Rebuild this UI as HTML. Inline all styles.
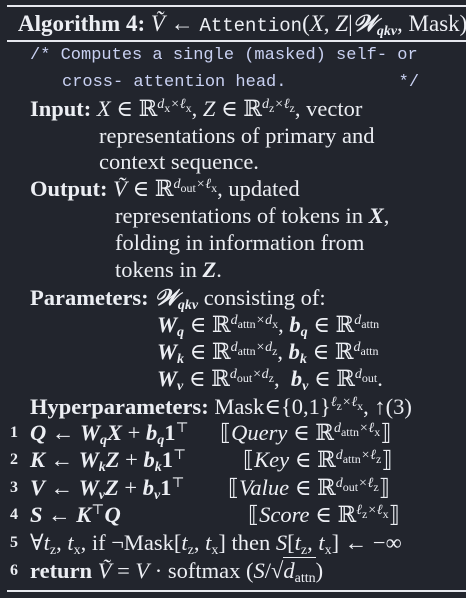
<!DOCTYPE html>
<html><head><meta charset="utf-8"><style>
html,body{margin:0;padding:0;background:#22252d;}
body{width:466px;height:598px;position:relative;overflow:hidden;color:#eceef3;font-family:"Liberation Serif","DejaVu Serif",serif;font-size:22.5px;}
.l{position:absolute;white-space:nowrap;line-height:24px;}
.rule{position:absolute;left:7px;width:459px;background:#e6e8ee;}
b{font-weight:bold}
i{font-style:italic}
sup{font-size:14px;vertical-align:8px;line-height:0;font-style:italic}
sub{font-size:14px;vertical-align:-4px;line-height:0}
.m{font-family:"Liberation Mono",monospace;}
.c{font-family:"Liberation Mono",monospace;font-size:17px;color:#c9d1f2;}
.n{font-size:16px;font-weight:bold;}
.s{font-style:normal;font-size:12px}
</style></head><body>
<div class="rule" style="top:5px;height:2px"></div>
<div class="l" style="left:18px;top:12px;font-size:23px"><b>Algorithm 4:</b> <i>Ṽ</i> ← <span class="m" style="font-size:19px">Attention</span>(<i>X</i>, <i>Z</i>|<b><i>𝒲</i><sub><i>qkv</i></sub></b>, Mask)</div>
<div class="rule" style="top:40px;height:2px"></div>
<div class="l c" style="left:30px;top:44px">/* Computes a single (masked) self- or</div>
<div class="l c" style="left:62px;top:71px">cross- attention head.&nbsp;&nbsp;&nbsp;&nbsp;&nbsp;&nbsp;&nbsp;&nbsp;&nbsp;&nbsp;&nbsp;*/</div>
<div class="l" style="left:30px;top:97px"><b>Input:</b> <i>X</i> ∈ ℝ<sup>d<sub class="s">x</sub>×ℓ<sub class="s">x</sub></sup>, <i>Z</i> ∈ ℝ<sup>d<sub class="s">z</sub>×ℓ<sub class="s">z</sub></sup>, vector</div>
<div class="l" style="left:99px;top:124px">representations of primary and</div>
<div class="l" style="left:99px;top:150px">context sequence.</div>
<div class="l" style="left:30px;top:177px"><b>Output:</b> <i>Ṽ</i> ∈ ℝ<sup>d<sub class="s">out</sub>×ℓ<sub class="s">x</sub></sup>, updated</div>
<div class="l" style="left:115px;top:204px">representations of tokens in <b><i>X</i></b>,</div>
<div class="l" style="left:115px;top:231px">folding in information from</div>
<div class="l" style="left:115px;top:258px">tokens in <b><i>Z</i></b>.</div>
<div class="l" style="left:30px;top:286px"><b>Parameters:</b> <b><i>𝒲</i><sub><i>qkv</i></sub></b> consisting of:</div>
<div class="l" style="left:157px;top:313px"><b><i>W</i><sub><i>q</i></sub></b> ∈ ℝ<sup>d<sub class="s">attn</sub>×d<sub class="s">x</sub></sup>, <b><i>b</i><sub><i>q</i></sub></b> ∈ ℝ<sup>d<sub class="s">attn</sub></sup></div>
<div class="l" style="left:157px;top:340px"><b><i>W</i><sub><i>k</i></sub></b> ∈ ℝ<sup>d<sub class="s">attn</sub>×d<sub class="s">z</sub></sup>, <b><i>b</i><sub><i>k</i></sub></b> ∈ ℝ<sup>d<sub class="s">attn</sub></sup></div>
<div class="l" style="left:157px;top:367px"><b><i>W</i><sub><i>v</i></sub></b> ∈ ℝ<sup>d<sub class="s">out</sub>×d<sub class="s">z</sub></sup>,&nbsp; <b><i>b</i><sub><i>v</i></sub></b> ∈ ℝ<sup>d<sub class="s">out</sub></sup>.</div>
<div class="l" style="left:30px;top:395px"><b>Hyperparameters:</b> Mask∈{0,1}<sup>ℓ<sub class="s">z</sub>×ℓ<sub class="s">x</sub></sup>, ↑(3)</div>
<div class="l n" style="left:10px;top:421px">1</div>
<div class="l" style="left:30px;top:421px"><b><i>Q</i></b> ← <b><i>W</i><sub><i>q</i></sub><i>X</i></b> + <b><i>b</i><sub><i>q</i></sub>1</b><sup style="font-style:normal">⊤</sup></div>
<div class="l" style="left:220px;top:421px">⟦<i>Query</i> ∈ ℝ<sup>d<sub class="s">attn</sub>×ℓ<sub class="s">x</sub></sup>⟧</div>
<div class="l n" style="left:10px;top:448px">2</div>
<div class="l" style="left:30px;top:448px"><b><i>K</i></b> ← <b><i>W</i><sub><i>k</i></sub><i>Z</i></b> + <b><i>b</i><sub><i>k</i></sub>1</b><sup style="font-style:normal">⊤</sup></div>
<div class="l" style="left:243px;top:448px">⟦<i>Key</i> ∈ ℝ<sup>d<sub class="s">attn</sub>×ℓ<sub class="s">z</sub></sup>⟧</div>
<div class="l n" style="left:10px;top:476px">3</div>
<div class="l" style="left:30px;top:476px"><b><i>V</i></b> ← <b><i>W</i><sub><i>v</i></sub><i>Z</i></b> + <b><i>b</i><sub><i>v</i></sub>1</b><sup style="font-style:normal">⊤</sup></div>
<div class="l" style="left:228px;top:476px">⟦<i>Value</i> ∈ ℝ<sup>d<sub class="s">out</sub>×ℓ<sub class="s">z</sub></sup>⟧</div>
<div class="l n" style="left:10px;top:503px">4</div>
<div class="l" style="left:30px;top:503px"><b><i>S</i></b> ← <b><i>K</i></b><sup style="font-style:normal">⊤</sup><b><i>Q</i></b></div>
<div class="l" style="left:248px;top:503px">⟦<i>Score</i> ∈ ℝ<sup>ℓ<sub class="s">z</sub>×ℓ<sub class="s">x</sub></sup>⟧</div>
<div class="l n" style="left:10px;top:531px">5</div>
<div class="l" style="left:30px;top:531px">∀<i>t</i><sub>z</sub>, <i>t</i><sub>x</sub>, if ¬Mask[<i>t</i><sub>z</sub>, <i>t</i><sub>x</sub>] then <i>S</i>[<i>t</i><sub>z</sub>, <i>t</i><sub>x</sub>] ← −∞</div>
<div class="l n" style="left:10px;top:559px">6</div>
<div class="l" style="left:30px;top:559px"><b>return</b> <i>Ṽ</i> = <i>V</i> · softmax (<i>S</i>/√<span style="border-top:1px solid #eceef3"><i>d</i><sub>attn</sub></span>)</div>
<div class="rule" style="top:590px;height:2px"></div>
</body></html>
